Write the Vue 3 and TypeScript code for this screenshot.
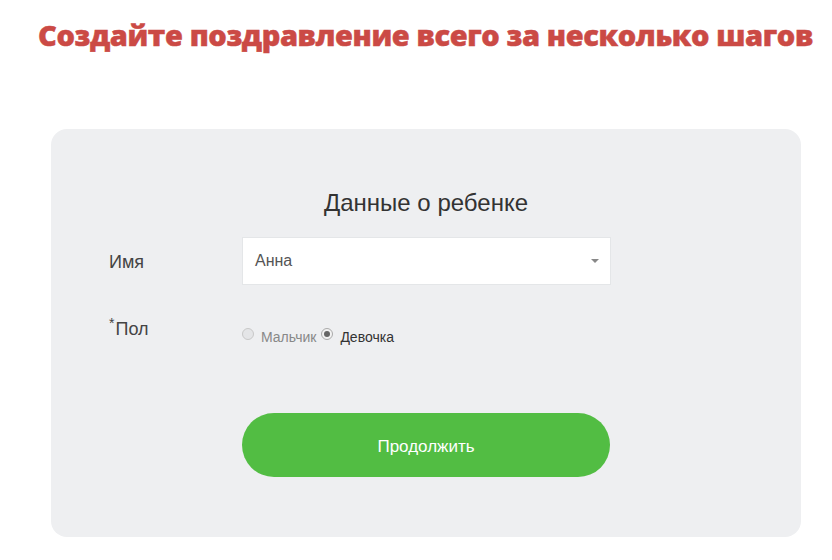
<script setup lang="ts">
const title = 'Создайте поздравление всего за несколько шагов'
</script>

<template>
  <div class="page">
    <h1 class="headline">{{ title }}</h1>
    <form class="card" @submit.prevent>
      <h2 class="card-title">Данные о ребенке</h2>
      <div class="row name-row">
        <label class="label">Имя</label>
        <div class="select">
          <span>Анна</span>
          <i class="caret"></i>
        </div>
      </div>
      <div class="row gender-row">
        <label class="label gender-label"><sup>*</sup>Пол</label>
        <div class="radios">
          <span class="radio"></span>
          <span class="opt muted">Мальчик</span>
          <span class="radio checked"></span>
          <span class="opt">Девочка</span>
        </div>
      </div>
      <div class="row action-row">
        <button class="submit" type="button">Продолжить</button>
      </div>
    </form>
  </div>
</template>

<style>
html, body { margin: 0; background: #fff; }
</style>

<style scoped>
.page {
  width: 832px;
  height: 560px;
  overflow: hidden;
  box-sizing: border-box;
  padding: 17px 31px 0 51px;
  font-family: "Liberation Sans", Arial, sans-serif;
  color: #333;
}
.headline {
  margin: 0 -20px 0 -13px;
  height: 112px;
  font-family: "Open Sans", sans-serif;
  font-size: 29px;
  line-height: 36px;
  font-weight: 800;
  color: #cb4a45;
  white-space: nowrap;
  letter-spacing: -0.38px;
  -webkit-text-stroke: 0.5px #cb4a45;
}
.card {
  height: 408px;
  box-sizing: border-box;
  background: #eeeff1;
  border-radius: 16px;
  padding: 58px 58px 0;
}
.card-title {
  margin: 0 0 18px;
  font-size: 24px;
  line-height: 32px;
  font-weight: 400;
  text-align: center;
  color: #333;
}
.row { display: flex; }
.label {
  width: 133px;
  flex: none;
  font-size: 18px;
  color: #444;
}
.name-row { align-items: center; }
.name-row .label { padding-top: 3px; }
.select {
  width: 369px;
  height: 48px;
  box-sizing: border-box;
  background: #fff;
  border: 1px solid #e4e6e8;
  padding: 0 11px 0 12px;
  display: flex;
  align-items: center;
  justify-content: space-between;
  font-size: 16px;
  color: #555;
}
.caret {
  width: 0;
  height: 0;
  border-left: 4px solid transparent;
  border-right: 4px solid transparent;
  border-top: 4px solid #888;
}
.gender-row { margin-top: 31px; }
.gender-label { line-height: 26px; }
.gender-label sup { font-size: 14px; line-height: 0; margin-right: 1px; }
.radios {
  padding-top: 11px;
  display: flex;
  align-items: flex-start;
  font-size: 14px;
  line-height: 16px;
  color: #333;
}
.radio {
  width: 12px;
  height: 12px;
  box-sizing: border-box;
  border: 1px solid #c8c8c8;
  border-radius: 50%;
  background: #e4e5e7;
  margin: 1px 0 0 0;
  position: relative;
}
.radio.checked { background: #f2f2f2; border-color: #aaa; }
.radio.checked::after {
  content: "";
  position: absolute;
  inset: 2px;
  border-radius: 50%;
  background: #666;
}
.opt { margin: 2px 4px 0 7px; }
.muted { color: #888; margin-right: 5px; }
.action-row { padding-left: 133px; margin-top: 68px; }
.submit {
  width: 368px;
  height: 64px;
  border: none;
  border-radius: 32px;
  background: #52bd43;
  color: #fff;
  font-family: inherit;
  font-size: 17px;
  padding: 4px 0 0;
}
</style>
